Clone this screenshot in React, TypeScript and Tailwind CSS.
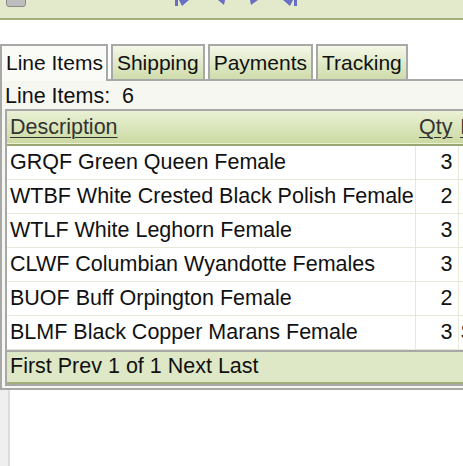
import React from 'react'

const rows = [
  { desc: 'GRQF Green Queen Female', qty: 3, extra: '' },
  { desc: 'WTBF White Crested Black Polish Female', qty: 2, extra: '' },
  { desc: 'WTLF White Leghorn Female', qty: 3, extra: '' },
  { desc: 'CLWF Columbian Wyandotte Females', qty: 3, extra: '' },
  { desc: 'BUOF Buff Orpington Female', qty: 2, extra: '' },
  { desc: 'BLMF Black Copper Marans Female', qty: 3, extra: 'S' },
]

const tabs = ['Line Items', 'Shipping', 'Payments', 'Tracking']

function NavIcons() {
  return (
    <svg width="130" height="8" viewBox="0 0 130 8" className="block">
      <g fill="#6b6fc4">
        <rect x="0" y="0" width="3" height="6" />
        <polygon points="4,0 14,0 7,6" />
        <polygon points="43,0 50,0 49,5" />
        <polygon points="75,0 83,0 76,5" />
        <polygon points="108,0 118,0 115,6" />
        <rect x="119" y="0" width="3" height="6" />
      </g>
    </svg>
  )
}

export default function App() {
  return (
    <div className="relative flex h-[466px] w-[463px] flex-col overflow-hidden bg-white font-['Liberation_Sans',Arial,sans-serif] text-[21.5px] text-[#111]">
      {/* Toolbar (scrolled off top) */}
      <div className="flex h-[20px] shrink-0 items-start border-b-2 border-[#a2ae7c] bg-[#e2eacb]">
        <div className="ml-[6px] -mt-[8px] h-[15px] w-[20px] rounded-[3px] border border-[#8a8a8a] bg-[#bdbdbd]" />
        <div className="ml-[149px]">
          <NavIcons />
        </div>
      </div>

      <div className="h-[24px] shrink-0" />

      {/* Tabs */}
      <div className="flex shrink-0 items-end gap-[3px] text-[21px]">
        {tabs.map((t, i) =>
          i === 0 ? (
            <div
              key={t}
              className="relative z-10 -mb-[2px] flex h-[37px] items-center border-x-2 border-t-2 border-[#a8a8a8] bg-[#fafaf6] pl-[4px] pr-[3px] pb-[2px] leading-none"
            >
              {t}
            </div>
          ) : (
            <div
              key={t}
              className="flex h-[35px] items-center border-2 border-b-0 border-[#a8a8a8] bg-gradient-to-b from-[#f4f8e8] to-[#cfdcab] px-[4px] leading-none"
            >
              {t}
            </div>
          )
        )}
      </div>

      {/* Panel */}
      <div className="shrink-0 border-l-2 border-t-2 border-b-2 border-[#a8a8a8] bg-[#f7f7f1] pb-[2px]">
        <div className="flex h-[26px] items-end pl-[3px] leading-none">Line Items:&nbsp; 6</div>
        <div className="ml-[3px] mt-[2px] w-[530px] border-2 border-r-0 border-[#a8a8a8]">
          <table className="w-full table-fixed border-collapse">
            <colgroup>
              <col className="w-[408px]" />
              <col className="w-[43px]" />
              <col />
            </colgroup>
            <thead>
              <tr className="h-[34px] border-b-2 border-[#9aa672] bg-gradient-to-b from-[#eaf1d5] to-[#cbdaa2]">
                <th className="pl-[3px] text-left font-normal text-[#333]">
                  <span className="underline decoration-1 underline-offset-[3px]">Description</span>
                </th>
                <th className="pl-[4px] text-left font-normal text-[#333]">
                  <span className="underline decoration-1 underline-offset-[3px]">Qty</span>
                </th>
                <th className="pl-[2px] text-left font-normal text-[#333]">
                  <span className="underline decoration-1 underline-offset-[3px]">Item</span>
                </th>
              </tr>
            </thead>
            <tbody className="bg-white">
              {rows.map((r) => (
                <tr key={r.desc} className="h-[34px] border-b border-[#e6e9d8]">
                  <td className="whitespace-nowrap border-r border-[#e6e9d8] pl-[3px]">{r.desc}</td>
                  <td className="border-r border-[#e6e9d8] pr-[5px] text-right">{r.qty}</td>
                  <td className="whitespace-nowrap pl-[2px]">{r.extra}</td>
                </tr>
              ))}
            </tbody>
          </table>
          <div className="flex h-[34px] items-center border-t-2 border-b-2 border-[#a8a8a8] border-b-[#a2ae7c] bg-[#dfe8c6] pl-[3px]">
            First Prev 1 of 1 Next Last
          </div>
        </div>
      </div>

      {/* Below */}
      <div className="flex flex-1">
        <div className="w-[10px] border-r-2 border-[#dcdcdc] bg-[#efefef]" />
      </div>
    </div>
  )
}
